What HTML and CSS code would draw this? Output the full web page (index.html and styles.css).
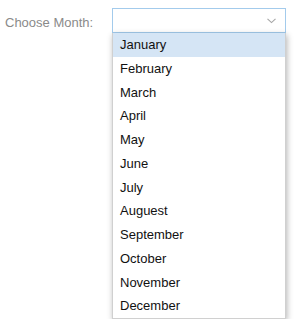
FILE: index.html
```html
<!DOCTYPE html>
<html>
<head>
<meta charset="utf-8">
<link rel="stylesheet" href="styles.css">
</head>
<body>
<div class="row">
  <div class="label">Choose Month:</div>
  <div class="select-wrap">
    <div class="select">
      <svg class="chev" width="9" height="6" viewBox="0 0 9 6"><path d="M0.5 0.8 L4.5 4.6 L8.5 0.8" fill="none" stroke="#a6a6a6" stroke-width="1.1"/></svg>
    </div>
    <div class="menu">
      <div class="item active">January</div>
      <div class="item">February</div>
      <div class="item">March</div>
      <div class="item">April</div>
      <div class="item">May</div>
      <div class="item">June</div>
      <div class="item">July</div>
      <div class="item">Auguest</div>
      <div class="item">September</div>
      <div class="item">October</div>
      <div class="item">November</div>
      <div class="item">December</div>
    </div>
  </div>
</div>
</body>
</html>
```
FILE: styles.css
```css
html, body {
  margin: 0;
  padding: 0;
  background: #fff;
  font-family: "Liberation Sans", Arial, sans-serif;
}
.row {
  display: flex;
  align-items: flex-start;
  padding: 8px 0 0 5px;
}
.label {
  width: 107px;
  height: 25px;
  line-height: 30px;
  font-size: 13px;
  color: #8a8a8a;
}
.select-wrap {
  width: 174px;
  display: flex;
  flex-direction: column;
}
.select {
  box-sizing: border-box;
  height: 25px;
  border: 1px solid #a3cbec;
  background: #fff;
  display: flex;
  align-items: center;
  justify-content: flex-end;
  padding-right: 9px;
}
.chev {
  display: block;
  margin-top: 1px;
}
.menu {
  box-sizing: border-box;
  background: #fff;
  border: 1px solid #d0d0d0;
  border-top: none;
  box-shadow: 1px 2px 6px rgba(0, 0, 0, 0.3);
}
.item {
  height: 23.75px;
  line-height: 23.75px;
  padding-left: 7px;
  font-size: 13px;
  color: #111;
}
.item.active {
  background: #d5e5f5;
}
```
